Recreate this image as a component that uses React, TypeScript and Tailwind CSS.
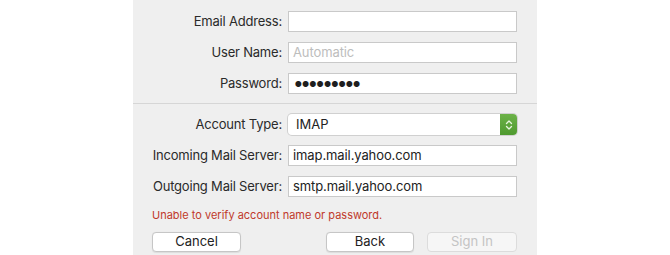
import React from "react";

const font = { fontFamily: "Inter, 'Noto Sans', sans-serif" };

function Field({ label, children }: { label: string; children: React.ReactNode }) {
  return (
    <>
      <div className="flex h-[21px] items-center justify-end text-[13px] tracking-[-0.2px] text-[#2a2a2a]">{label}</div>
      {children}
    </>
  );
}

function TextBox({ value, placeholder }: { value?: string; placeholder?: string }) {
  return (
    <div className="flex h-[21px] items-center border border-[#c9c9c9] bg-white px-[4px] text-[13px] tracking-[-0.1px] text-[#222]">
      {value ? <span>{value}</span> : <span className="text-[#bdbdbd]">{placeholder}</span>}
    </div>
  );
}

function Button({ label, disabled }: { label: string; disabled?: boolean }) {
  return (
    <div
      className={
        disabled
          ? "flex h-[20px] items-center justify-center rounded-[4px] border border-[#dcdcdc] bg-[#f6f6f6] text-[13px] text-[#c4c4c4]"
          : "flex h-[20px] items-center justify-center rounded-[4px] border border-[#c6c6c6] bg-white text-[13px] text-[#222] shadow-[0_0.5px_1px_rgba(0,0,0,0.08)]"
      }
    >
      {label}
    </div>
  );
}

export default function App() {
  return (
    <div className="h-[255px] w-[670px] bg-white" style={font}>
      <div className="ml-[133px] flex h-[255px] w-[404px] flex-col bg-[#efefef]">
        <div className="grid grid-cols-[149px_229px] gap-x-[6px] gap-y-[10px] pt-[11px]">
          <Field label="Email Address:">
            <TextBox value="" placeholder="" />
          </Field>
          <Field label="User Name:">
            <TextBox placeholder="Automatic" />
          </Field>
          <Field label="Password:">
            <div className="flex h-[21px] items-center border border-[#c9c9c9] bg-white px-[4px] text-[19px] leading-none tracking-[-3.4px] text-[#1e1e1e]">
              •••••••••
            </div>
          </Field>
        </div>

        <div className="mt-[9px] h-px bg-[#d6d6d6]" />

        <div className="grid grid-cols-[149px_229px] gap-x-[6px] gap-y-[10px] pt-[10px]">
          <Field label="Account Type:">
            <div className="flex h-[21px] items-stretch rounded-[4px] bg-white shadow-[0_0_0_1px_#d0d0d0]">
              <div className="flex flex-1 items-center px-[8px] text-[13px] text-[#222]">IMAP</div>
              <div className="flex w-[17px] items-center justify-center rounded-r-[4px] bg-gradient-to-b from-[#6cb248] to-[#4f9a2f]">
                <svg width="8" height="12" viewBox="0 0 8 12" fill="none" stroke="#e8f5df" strokeWidth="1.3" strokeLinecap="round" strokeLinejoin="round">
                  <path d="M1.5 4.5 L4 2 L6.5 4.5" />
                  <path d="M1.5 7.5 L4 10 L6.5 7.5" />
                </svg>
              </div>
            </div>
          </Field>
          <Field label="Incoming Mail Server:">
            <TextBox value="imap.mail.yahoo.com" />
          </Field>
          <Field label="Outgoing Mail Server:">
            <TextBox value="smtp.mail.yahoo.com" />
          </Field>
        </div>

        <div className="mt-[10px] pl-[19px] text-[11px] text-[#c0392b]">Unable to verify account name or password.</div>

        <div className="mt-[8px] flex pl-[19px]">
          <div className="w-[89px]">
            <Button label="Cancel" />
          </div>
          <div className="ml-[85px] w-[88px]">
            <Button label="Back" />
          </div>
          <div className="ml-[13px] w-[90px]">
            <Button label="Sign In" disabled />
          </div>
        </div>
      </div>
    </div>
  );
}
